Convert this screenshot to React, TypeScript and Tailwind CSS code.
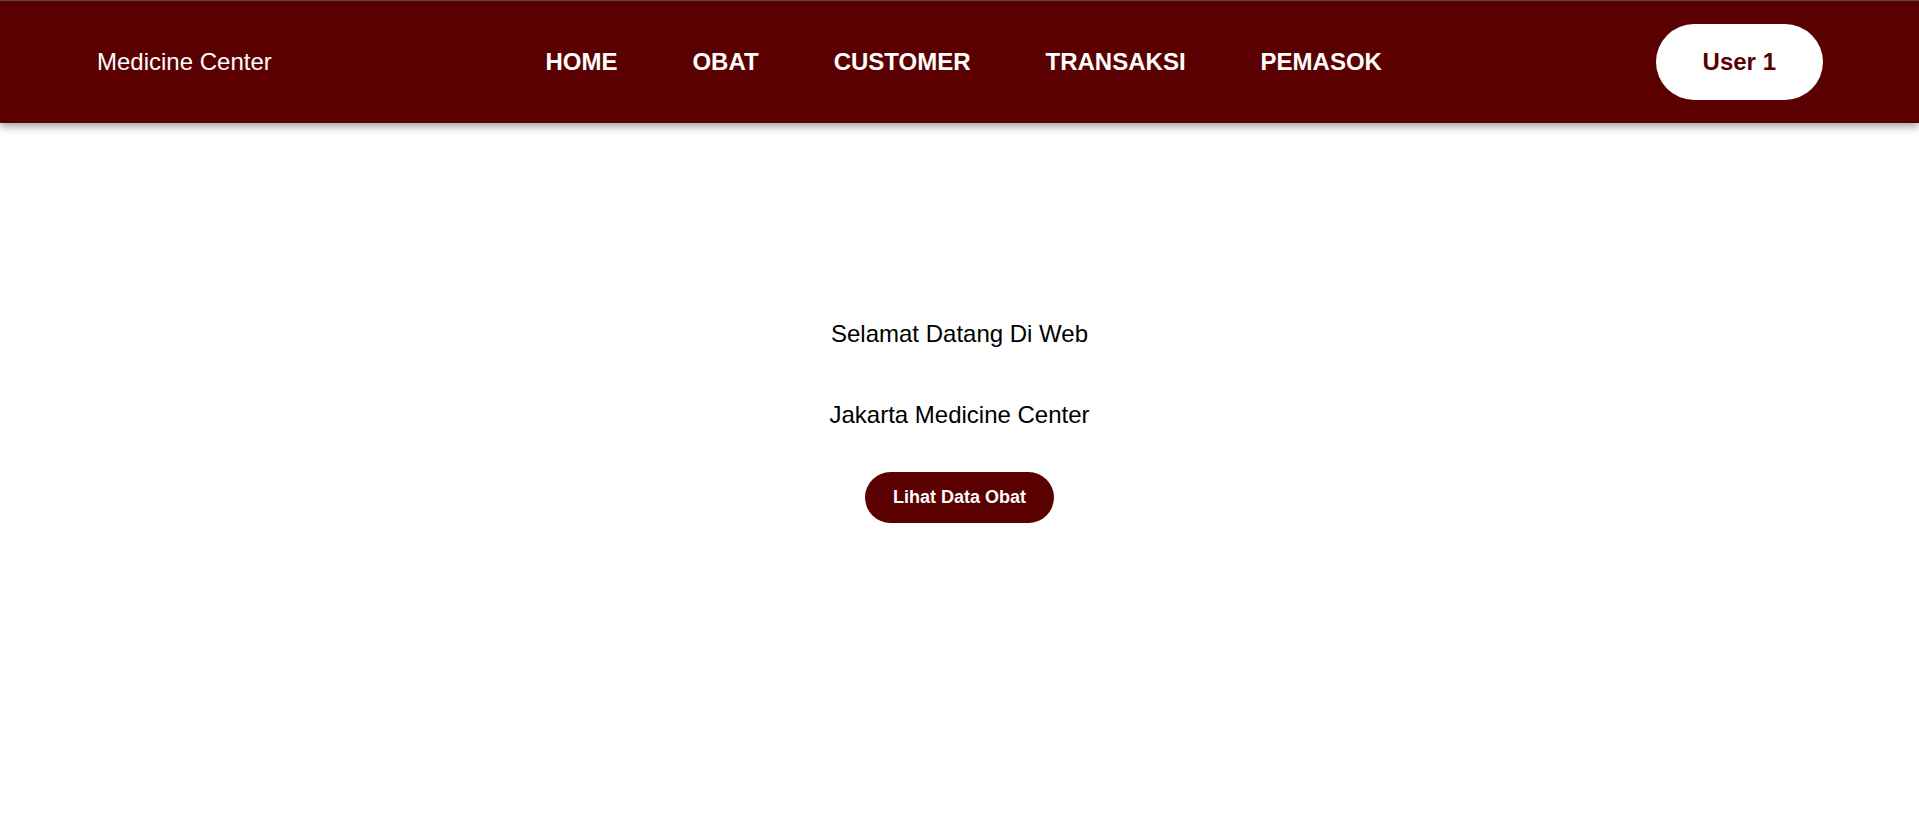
export default function App() {
  const links = ['HOME', 'OBAT', 'CUSTOMER', 'TRANSAKSI', 'PEMASOK'];

  return (
    <div className="min-h-screen bg-white font-['Liberation_Sans',Arial,sans-serif]">
      <nav className="relative z-10 flex h-[123px] items-center justify-between border-t border-[#4d4d4d] bg-[#5b0000] px-[96px] shadow-[0_4px_8px_rgba(0,0,0,0.35)]">
        <a href="#" className="pl-px text-[24px] leading-8 text-white">
          Medicine Center
        </a>
        <ul className="flex items-center gap-[75px]">
          {links.map((link) => (
            <li key={link}>
              <a href="#" className="text-[24px] font-bold leading-8 text-white">
                {link}
              </a>
            </li>
          ))}
        </ul>
        <button className="rounded-full bg-white px-[47px] py-6 text-[24px] font-bold leading-7 text-[#5b0000]">
          User 1
        </button>
      </nav>

      <main className="flex flex-col items-center pt-[195px] text-black">
        <p className="text-[24px] leading-8">Selamat Datang Di Web</p>
        <p className="mt-[49px] text-[24px] leading-8">Jakarta Medicine Center</p>
        <button className="mt-[41px] rounded-full bg-[#5b0000] px-[28px] py-3 text-[18px] font-bold leading-[27px] text-white">
          Lihat Data Obat
        </button>
      </main>
    </div>
  );
}
